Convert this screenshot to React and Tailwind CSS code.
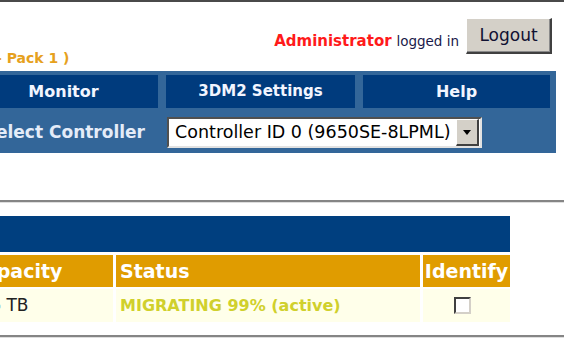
import React from 'react';

const navItems = [
  { label: 'Monitor', size: 'text-[16px]' },
  { label: '3DM2 Settings', size: 'text-[15px]' },
  { label: 'Help', size: 'text-[16px]' },
];

function Rule() {
  return <div className="h-0 border-t-2 border-b border-t-[#858585] border-b-[#dedede]" />;
}

export default function App() {
  return (
    <div className="h-[345px] w-[564px] overflow-hidden bg-white font-['DejaVu_Sans',sans-serif]">
      <div className="-ml-[36px] w-[600px]">
        <div className="h-[2px] bg-[#4a4a4a]" />

        {/* header */}
        <div className="flex h-[69px] items-start justify-between">
          <p className="self-end pb-[6px] pl-[32px] text-[14px] font-bold leading-none text-[#e6a11d]">
            - Pack 1 )
          </p>
          <div className="flex items-end gap-[7px] pt-[16px] pr-[12px]">
            <p className="mb-[5px] text-[15px] leading-none text-[#1a1a4a]">
              <span className="font-bold text-[#ff1a1a]">Administrator</span>{' '}
              <span className="text-[13.5px]">logged in</span>
            </p>
            <button className="flex h-[36px] w-[86px] items-center justify-center border-t border-l border-b-2 border-r-2 border-t-white border-l-white border-b-[#404040] border-r-[#404040] bg-[#d4d0c8] text-[17px] leading-none text-[#111133] shadow-[inset_-1px_-1px_0_#8a8a8a]">
              Logout
            </button>
          </div>
        </div>

        {/* nav */}
        <div className="w-[592px] bg-[#336699] px-[5px] pt-[4px]">
          <div className="grid grid-cols-[189px_189px_187px] gap-x-[8px]">
            {navItems.map((item) => (
              <div
                key={item.label}
                className={`flex h-[33px] items-center justify-center bg-[#003b7d] font-bold text-[#f2f5ff] ${item.size}`}
              >
                {item.label}
              </div>
            ))}
          </div>
          <div className="flex h-[45px] items-center pt-[4px]">
            <div className="w-[189px] pr-[13px] text-right text-[17px] font-bold text-[#e4ecf8]">
              Select Controller
            </div>
            <div className="ml-[9px] flex h-[31px] w-[315px] items-center border-2 border-t-[#505050] border-l-[#505050] border-b-[#e2e2e2] border-r-[#e2e2e2] bg-white py-[1px] pr-[1px] pl-[6px]">
              <span className="flex-1 text-[17.5px] leading-none text-black">Controller ID 0 (9650SE-8LPML)</span>
              <span className="flex h-[27px] w-[23px] items-center justify-center border-t border-l border-b-2 border-r-2 border-t-white border-l-white border-b-[#404040] border-r-[#404040] bg-[#d4d0c8]">
                <svg width="8" height="5" viewBox="0 0 8 5">
                  <path d="M0 0h8L4 5z" fill="#000" />
                </svg>
              </span>
            </div>
          </div>
        </div>

        <div className="mt-[47px]">
          <Rule />
        </div>

        {/* unit table */}
        <div className="mt-[13px] ml-[2px] w-[544px]">
          <div className="h-[36px] bg-[#003f7f]" />
          <div className="mt-[3px] grid h-[32px] grid-cols-[147px_304px_87px] gap-x-[3px] text-[19px] font-bold text-white">
            <div className="flex items-center bg-[#e09c00] pl-[4px]">Capacity</div>
            <div className="flex items-center bg-[#e09c00] pl-[4px]">Status</div>
            <div className="flex items-center justify-center bg-[#e09c00]">Identify</div>
          </div>
          <div className="mt-[2px] grid h-[33px] grid-cols-[147px_304px_87px] gap-x-[3px]">
            <div className="flex items-center bg-[#ffffea] pl-[8px] text-[17px] text-[#222]">3.6 TB</div>
            <div className="flex items-center bg-[#ffffea] pl-[4px] text-[16px] font-bold text-[#d0d02c]">
              MIGRATING 99% (active)
            </div>
            <div className="flex items-center justify-center bg-[#ffffea] pr-[8px]">
              <span className="h-[17px] w-[17px] border-2 border-t-[#404040] border-l-[#404040] border-b-[#d4d0c8] border-r-[#d4d0c8] bg-white" />
            </div>
          </div>
        </div>

        <div className="mt-[13px]">
          <Rule />
        </div>
      </div>
    </div>
  );
}
